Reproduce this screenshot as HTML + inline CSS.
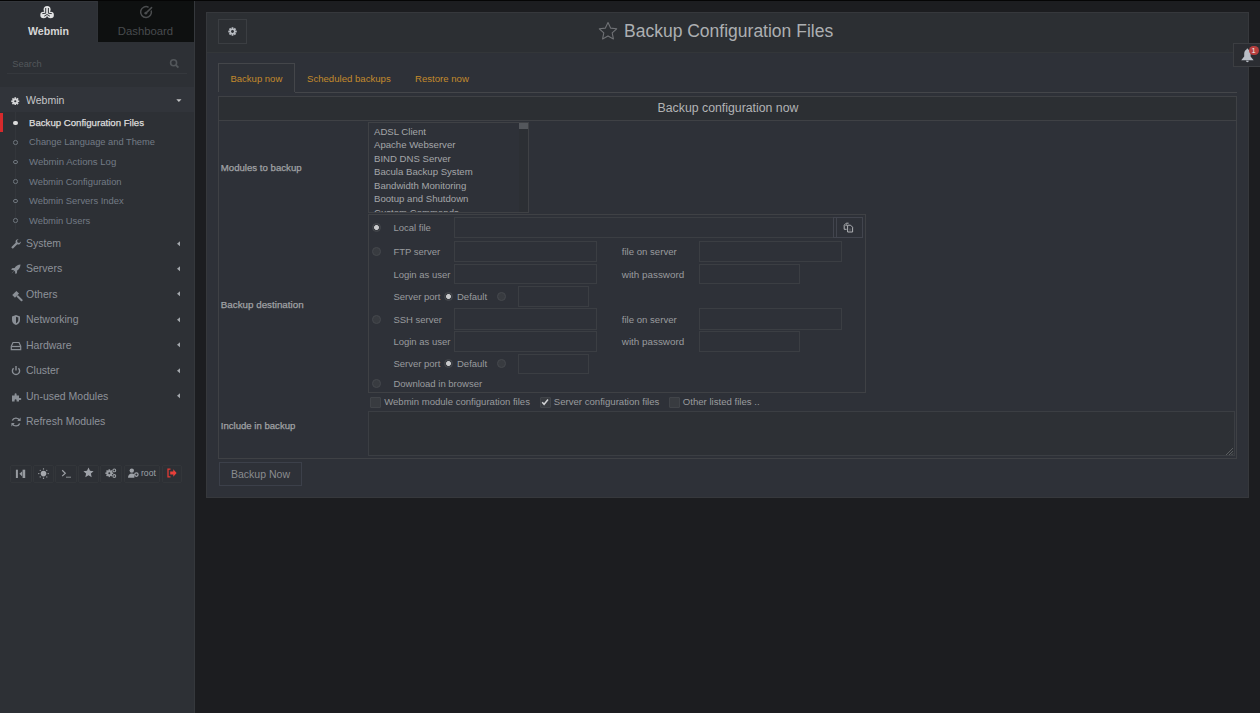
<!DOCTYPE html>
<html><head><meta charset="utf-8"><title>Backup Configuration Files</title>
<style>
*{box-sizing:border-box;margin:0;padding:0}
html,body{width:1260px;height:713px;overflow:hidden;background:#1c1d20;font-family:"Liberation Sans",sans-serif}
.a{position:absolute}
.t{position:absolute;white-space:nowrap;line-height:1}
.sub{font-size:9.4px;color:#78808a}
.menu{font-size:10.5px;color:#959aa1}
.bbtn{position:absolute;top:464.5px;height:18.5px;border:1px solid #33363a;border-radius:2px}
.lbl{font-size:9.5px;color:#999b9e}
.inp{position:absolute;border:1px solid #3b3e43}
.radio{position:absolute;width:9px;height:9px;border-radius:50%;background:#383b40;border:1px solid #45484d}
.radio.on{background:radial-gradient(circle at 50% 50%,#c9cacc 0,#c9cacc 2.1px,#383b40 2.8px)}
.cb{position:absolute;width:11px;height:11px;border:1px solid #414449;background:#383b40;border-radius:1px}
</style></head><body>
<div class="a" style="left:0px;top:0px;width:1260px;height:1px;background:#050505;"></div>
<div class="a" style="left:0px;top:1px;width:194px;height:712px;background:#2d3035;"></div>
<div class="a" style="left:194px;top:1px;width:1px;height:712px;background:#35383c;"></div>
<div class="a" style="left:98px;top:1px;width:96px;height:41px;background:#0e1010;"></div>
<div class="a" style="left:0px;top:1px;width:97px;height:1px;background:#33363b;"></div>
<div class="a" style="left:97px;top:1px;width:1px;height:41px;background:#303338;"></div>
<svg class="a" style="left:36px;top:2px" width="24" height="20" viewBox="0 0 24 20"><g fill="#e2e3e4"><circle cx="11.1" cy="7.4" r="3.5"/><circle cx="7.6" cy="13" r="3.3"/><circle cx="14.6" cy="13" r="3.3"/><path d="M11.1 7.1L7.6 13 11.05 14.6 14.6 13z"/></g><path d="M9.7 6V11.3L6.3 11.6M12.4 6V11.3L15.8 11.6M8.2 14.2L11.05 12.5 13.9 14.2" fill="none" stroke="#2d3035" stroke-width="0.95"/></svg>
<div class="t" style="left:0;width:97px;text-align:center;top:26px;font-size:10.6px;font-weight:700;color:#d6d6d6">Webmin</div>
<svg class="a" style="left:134px;top:2px" width="24" height="20" viewBox="0 0 24 20"><path d="M14.6 5.3A5.4 5.4 0 1 0 17.2 8.5" fill="none" stroke="#4b4d4f" stroke-width="1.5"/><path d="M11.9 11.1L17.6 5.6" stroke="#4b4d4f" stroke-width="1.5" stroke-linecap="round"/><circle cx="11.8" cy="11.2" r="1.4" fill="#4b4d4f"/></svg>
<div class="t" style="left:97px;width:97px;text-align:center;top:26px;font-size:11.3px;color:#484b4e">Dashboard</div>
<div class="t" style="left:12.3px;top:59.8px;font-size:9.3px;color:#53575b;">Search</div>
<svg class="a" style="left:169px;top:58px" width="11" height="11" viewBox="0 0 11 11"><circle cx="4.6" cy="4.8" r="3" fill="none" stroke="#53575b" stroke-width="1.6"/><path d="M6.9 7.1L9.4 9.6" stroke="#53575b" stroke-width="1.8"/></svg>
<div class="a" style="left:7px;top:73px;width:180px;height:1px;background:#35383d;"></div>
<div class="a" style="left:0px;top:87px;width:194px;height:25px;background:#31343a;"></div>
<svg class="a" style="left:11px;top:96.5px" width="8.5" height="8.5" viewBox="0 0 10 10"><g fill="#d5d6d8"><circle cx="5" cy="5" r="3.3"/><rect x="4" y="0.3" width="2" height="9.4"/><rect x="0.3" y="4" width="9.4" height="2"/><rect x="4" y="0.3" width="2" height="9.4" transform="rotate(45 5 5)"/><rect x="4" y="0.3" width="2" height="9.4" transform="rotate(-45 5 5)"/></g><circle cx="5" cy="5" r="1.3" fill="#31343a"/></svg>
<div class="t" style="left:26px;top:95.2px;font-size:10.5px;color:#c6c7c9;">Webmin</div>
<svg class="a" style="left:175.5px;top:98.5px" width="6" height="4" viewBox="0 0 6 4"><path d="M0.3 0.3H5.5L2.9 3z" fill="#c0c1c3"/></svg>
<div class="a" style="left:15px;top:112px;width:1px;height:118px;background:#33363b;"></div>
<div class="a" style="left:0px;top:112.5px;width:3px;height:19.5px;background:#d62a2c;"></div>
<div class="a" style="left:13.25px;top:120.75px;width:4.5px;height:4.5px;background:#dcdcdc;border-radius:50%"></div>
<div class="t" style="left:29px;top:117.7px;font-size:9.65px;color:#dedede;-webkit-text-stroke:0.25px #dedede">Backup Configuration Files</div>
<div class="a" style="left:13.25px;top:140.05px;width:4.5px;height:4.5px;background:#2d3035;border:1px solid #6f767e;border-radius:50%"></div>
<div class="t" style="left:29px;top:137.8px;font-size:9.3px;color:#737b85;">Change Language and Theme</div>
<div class="a" style="left:13.25px;top:159.55px;width:4.5px;height:4.5px;background:#2d3035;border:1px solid #6f767e;border-radius:50%"></div>
<div class="t" style="left:29px;top:157.3px;font-size:9.6px;color:#737b85;">Webmin Actions Log</div>
<div class="a" style="left:13.25px;top:179.25px;width:4.5px;height:4.5px;background:#2d3035;border:1px solid #6f767e;border-radius:50%"></div>
<div class="t" style="left:29px;top:177.0px;font-size:9.4px;color:#737b85;">Webmin Configuration</div>
<div class="a" style="left:13.25px;top:198.55px;width:4.5px;height:4.5px;background:#2d3035;border:1px solid #6f767e;border-radius:50%"></div>
<div class="t" style="left:29px;top:196.3px;font-size:9.4px;color:#737b85;">Webmin Servers Index</div>
<div class="a" style="left:13.25px;top:218.15px;width:4.5px;height:4.5px;background:#2d3035;border:1px solid #6f767e;border-radius:50%"></div>
<div class="t" style="left:29px;top:215.9px;font-size:9.4px;color:#737b85;">Webmin Users</div>
<svg class="a" style="left:9.5px;top:237.8px" width="13" height="13" viewBox="0 0 13 13"><path d="M8.6 1.2a2.6 2.6 0 0 0-2.9 3.5L1.2 9.2l1.6 1.6 4.5-4.5a2.6 2.6 0 0 0 3.5-2.9L9.2 5 7.6 4.4 7 2.8z" fill="#8a8f96"/></svg>
<div class="t" style="left:26px;top:237.9px;font-size:10.5px;color:#8d929a;">System</div>
<svg class="a" style="left:176.5px;top:240.5px" width="4" height="6" viewBox="0 0 4 6"><path d="M3 0.3V5.3L0 2.8z" fill="#a3a7ac"/></svg>
<svg class="a" style="left:9.5px;top:263.1px" width="13" height="13" viewBox="0 0 13 13"><path d="M10.5 1.5C8 1.5 6 3 4.6 5L2 5.3 1.2 6.8l2.4.4L5 8.6l.4 2.4 1.5-.8.3-2.6C9.2 6.2 10.5 4 10.5 1.5z M3.4 8.2L1.5 10.5 3.8 8.6z" fill="#8a8f96"/></svg>
<div class="t" style="left:26px;top:263.2px;font-size:10.5px;color:#8d929a;">Servers</div>
<svg class="a" style="left:176.5px;top:265.8px" width="4" height="6" viewBox="0 0 4 6"><path d="M3 0.3V5.3L0 2.8z" fill="#a3a7ac"/></svg>
<svg class="a" style="left:9.5px;top:288.7px" width="13" height="13" viewBox="0 0 13 13"><path d="M9.06 4.56L6.38 1.88 2.28 5.96 4.96 8.66z" fill="#8a8f96"/><path d="M7.6 7.3L11.6 11.3" stroke="#8a8f96" stroke-width="2" stroke-linecap="round"/></svg>
<div class="t" style="left:26px;top:288.8px;font-size:10.5px;color:#8d929a;">Others</div>
<svg class="a" style="left:176.5px;top:291.4px" width="4" height="6" viewBox="0 0 4 6"><path d="M3 0.3V5.3L0 2.8z" fill="#a3a7ac"/></svg>
<svg class="a" style="left:9.5px;top:314.0px" width="13" height="13" viewBox="0 0 13 13"><path d="M6 1L10 2.5V6c0 2.5-1.8 4.2-4 5-2.2-.8-4-2.5-4-5V2.5z" fill="#8a8f96"/><path d="M6 2.7V9.3C7.3 8.6 8.3 7.5 8.3 6V3.5z" fill="#2d3035"/></svg>
<div class="t" style="left:26px;top:314.1px;font-size:10.5px;color:#8d929a;">Networking</div>
<svg class="a" style="left:176.5px;top:316.7px" width="4" height="6" viewBox="0 0 4 6"><path d="M3 0.3V5.3L0 2.8z" fill="#a3a7ac"/></svg>
<svg class="a" style="left:9.5px;top:339.5px" width="13" height="13" viewBox="0 0 13 13"><path d="M1.3 6.2L3 2.5h6L10.7 6.2V9.7H1.3z" fill="none" stroke="#8a8f96" stroke-width="1.2"/><path d="M1.3 6.5h9.4" stroke="#8a8f96" stroke-width="1.2"/></svg>
<div class="t" style="left:26px;top:339.6px;font-size:10.5px;color:#8d929a;">Hardware</div>
<svg class="a" style="left:176.5px;top:342.2px" width="4" height="6" viewBox="0 0 4 6"><path d="M3 0.3V5.3L0 2.8z" fill="#a3a7ac"/></svg>
<svg class="a" style="left:9.5px;top:364.9px" width="13" height="13" viewBox="0 0 13 13"><path d="M3.6 3.2A3.6 3.6 0 1 0 8.4 3.2" fill="none" stroke="#8a8f96" stroke-width="1.4"/><path d="M6 1v4.5" stroke="#8a8f96" stroke-width="1.4"/></svg>
<div class="t" style="left:26px;top:365.0px;font-size:10.5px;color:#8d929a;">Cluster</div>
<svg class="a" style="left:176.5px;top:367.6px" width="4" height="6" viewBox="0 0 4 6"><path d="M3 0.3V5.3L0 2.8z" fill="#a3a7ac"/></svg>
<svg class="a" style="left:9.5px;top:390.5px" width="13" height="13" viewBox="0 0 13 13"><path d="M2 4.5H4.6V3.2a1 1 0 0 1 2 0V4.5H9V6.9h1.3a1 1 0 0 1 0 2H9V10.6H6.6V9.2a1 1 0 0 0-2 0V10.6H2z" fill="#8a8f96"/></svg>
<div class="t" style="left:26px;top:390.6px;font-size:10.5px;color:#8d929a;">Un-used Modules</div>
<svg class="a" style="left:176.5px;top:393.2px" width="4" height="6" viewBox="0 0 4 6"><path d="M3 0.3V5.3L0 2.8z" fill="#a3a7ac"/></svg>
<svg class="a" style="left:9.5px;top:416.0px" width="13" height="13" viewBox="0 0 13 13"><path d="M9.6 4.3A4 4 0 0 0 2.3 4.6M2.4 7.7A4 4 0 0 0 9.7 7.4" fill="none" stroke="#8a8f96" stroke-width="1.4"/><path d="M10.6 1.6V5H7.2z M1.4 10.4V7h3.4z" fill="#8a8f96"/></svg>
<div class="t" style="left:26px;top:416.1px;font-size:10.5px;color:#8d929a;">Refresh Modules</div>
<div class="bbtn" style="left:10.3px;width:21.4px"></div>
<div class="bbtn" style="left:33.3px;width:20.7px"></div>
<div class="bbtn" style="left:55.2px;width:21.4px"></div>
<div class="bbtn" style="left:78.2px;width:20.6px"></div>
<div class="bbtn" style="left:100.4px;width:21.4px"></div>
<div class="bbtn" style="left:124.3px;width:36px"></div>
<div class="bbtn" style="left:162.2px;width:19.5px"></div>
<svg class="a" style="left:15px;top:469px" width="11" height="10" viewBox="0 0 11 10"><rect x="0.9" y="0.7" width="2" height="8.3" fill="#979ba0"/><path d="M4.4 4.85L7.2 2.2V7.5z" fill="#979ba0"/><rect x="7.6" y="0.7" width="2.6" height="8.3" fill="#979ba0"/></svg>
<svg class="a" style="left:38px;top:468px" width="11" height="11" viewBox="0 0 11 11"><circle cx="5.5" cy="5.6" r="2.8" fill="#a5a8ad"/><g fill="#a5a8ad"><circle cx="5.5" cy="0.9" r="0.7"/><circle cx="5.5" cy="10.3" r="0.7"/><circle cx="0.8" cy="5.6" r="0.7"/><circle cx="10.2" cy="5.6" r="0.7"/><circle cx="2.2" cy="2.3" r="0.6"/><circle cx="8.8" cy="2.3" r="0.6"/><circle cx="2.2" cy="8.9" r="0.6"/><circle cx="8.8" cy="8.9" r="0.6"/></g></svg>
<svg class="a" style="left:61px;top:469px" width="11" height="9" viewBox="0 0 11 9"><path d="M1.2 1.3L4.3 4.2 1.2 7.1" fill="none" stroke="#9da0a5" stroke-width="1.2"/><path d="M5 8.2H10" stroke="#9da0a5" stroke-width="0.85"/></svg>
<svg class="a" style="left:83px;top:467px" width="11" height="11" viewBox="0 0 11 11"><path d="M5.5 0.5l1.5 3.3 3.6.4-2.7 2.4.8 3.6-3.2-1.9-3.2 1.9.8-3.6L.4 4.2 4 3.8z" fill="#9ea2a8"/></svg>
<svg class="a" style="left:104px;top:466px" width="14" height="13" viewBox="0 0 14 13"><g fill="#9a9ea3"><circle cx="5.3" cy="7.2" r="2.9"/><rect x="4.5" y="3.3" width="1.6" height="7.8"/><rect x="1.4" y="6.4" width="7.8" height="1.6"/><rect x="4.5" y="3.3" width="1.6" height="7.8" transform="rotate(45 5.3 7.2)"/><rect x="4.5" y="3.3" width="1.6" height="7.8" transform="rotate(-45 5.3 7.2)"/></g><circle cx="5.3" cy="7.2" r="1" fill="#2d3035"/><circle cx="10.3" cy="4.4" r="1.4" fill="none" stroke="#9a9ea3" stroke-width="1.1"/><circle cx="10.3" cy="10" r="1.4" fill="none" stroke="#9a9ea3" stroke-width="1.1"/></svg>
<svg class="a" style="left:127px;top:467px" width="12" height="12" viewBox="0 0 12 12"><circle cx="4.8" cy="3.6" r="2.2" fill="#9ea2a8"/><path d="M1 10.8c0-2.6 1.5-4.2 3.8-4.2 1.2 0 2 .3 2.6.8V10.8z" fill="#9ea2a8"/><circle cx="9.4" cy="7.6" r="1.7" fill="none" stroke="#9ea2a8" stroke-width="1.2"/></svg>
<div class="t" style="left:141px;top:468.5px;font-size:8.6px;color:#9ea2a8;">root</div>
<svg class="a" style="left:166px;top:468px" width="12" height="10" viewBox="0 0 12 10"><path d="M4.5 1.2H2V8.8H4.5" fill="none" stroke="#e13a35" stroke-width="1.3"/><path d="M4.2 3.6H7.3V1.3L10.6 5 7.3 8.7V6.4H4.2z" fill="#e8403a"/></svg>
<div class="a" style="left:206px;top:12px;width:1043px;height:486px;background:#2e3138;border:1px solid #36383c;"></div>
<div class="a" style="left:207px;top:13px;width:1041px;height:39px;background:#2c2f33;"></div>
<div class="a" style="left:207px;top:52px;width:1041px;height:1px;background:#333639;"></div>
<div class="a" style="left:218px;top:19px;width:29px;height:25px;border:1px solid #3b3e42;"></div>
<svg class="a" style="left:228px;top:27px" width="9" height="9" viewBox="0 0 10 10"><g fill="#babdc3"><circle cx="5" cy="5" r="3.3"/><rect x="4" y="0.3" width="2" height="9.4"/><rect x="0.3" y="4" width="9.4" height="2"/><rect x="4" y="0.3" width="2" height="9.4" transform="rotate(45 5 5)"/><rect x="4" y="0.3" width="2" height="9.4" transform="rotate(-45 5 5)"/></g><circle cx="5" cy="5" r="1.6" fill="#2c2f33"/></svg>
<svg class="a" style="left:598px;top:21px" width="20" height="20" viewBox="0 0 20 20"><path d="M10 1.5l2.6 5.6 6.1.7-4.5 4.1 1.2 6-5.4-3-5.4 3 1.2-6L1.3 7.8l6.1-.7z" fill="none" stroke="#707276" stroke-width="1.1" stroke-linejoin="round"/></svg>
<div class="t" style="left:624px;top:23.2px;font-size:17.5px;color:#adafb2;">Backup Configuration Files</div>
<div class="a" style="left:1233px;top:43px;width:28px;height:24px;background:#2b2d32;border:1px solid #3c3e42;"></div>
<svg class="a" style="left:1240px;top:47.5px" width="15" height="15" viewBox="0 0 15 15"><path d="M7.4 0.4C6.9 0.4 6.6 0.9 6.5 1.4 4.9 2.2 4.2 3.8 4.2 6V8.4L1.2 12.2H13.6L10.6 8.4V6C10.6 3.8 9.9 2.2 8.3 1.4 8.2 0.9 7.9 0.4 7.4 0.4z M6 12.8a1.4 1.4 0 0 0 2.8 0z" fill="#b9bec6"/></svg>
<div class="a" style="left:1249px;top:45.8px;width:9.6px;height:9.6px;background:#b73e3e;border-radius:50%"></div>
<div class="t" style="left:1248.5px;width:10px;text-align:center;top:47.3px;font-size:7.5px;color:#f0f0f0">1</div>
<div class="a" style="left:218px;top:63px;width:77px;height:29px;border:1px solid #44464a;border-bottom:none;background:#2e3137"></div>
<div class="a" style="left:295px;top:92px;width:942px;height:1px;background:#44464a;"></div>
<div class="t" style="left:230.5px;top:73.8px;font-size:9.5px;color:#c38a2c;">Backup now</div>
<div class="t" style="left:307px;top:73.8px;font-size:9.6px;color:#c38a2c;">Scheduled backups</div>
<div class="t" style="left:415px;top:73.8px;font-size:9.6px;color:#c38a2c;">Restore now</div>
<div class="a" style="left:218px;top:96px;width:1019px;height:363px;border:1px solid #3f4145;"></div>
<div class="a" style="left:219px;top:97px;width:1017px;height:23px;background:#2c2f33;"></div>
<div class="a" style="left:219px;top:120px;width:1017px;height:1px;background:#3f4145;"></div>
<div class="t" style="left:220px;width:1016px;text-align:center;top:101.5px;font-size:12.3px;color:#b2b3b5">Backup configuration now</div>
<div class="t" style="left:220.8px;top:162.7px;font-size:9.65px;color:#a0a2a5;-webkit-text-stroke:0.25px #a0a2a5">Modules to backup</div>
<div class="t" style="left:220.8px;top:299.6px;font-size:9.8px;color:#a0a2a5;-webkit-text-stroke:0.25px #a0a2a5">Backup destination</div>
<div class="t" style="left:220.8px;top:421.2px;font-size:9.58px;color:#a0a2a5;-webkit-text-stroke:0.25px #a0a2a5">Include in backup</div>
<div class="a" style="left:368px;top:122px;width:161px;height:91px;border:1px solid #3f4145;overflow:hidden"><div class="a" style="left:150px;top:0;width:10px;height:89px;background:#2c2f34"></div><div class="a" style="left:150px;top:0;width:9px;height:6px;background:#54575c"></div><div class="t" style="left:5px;top:1.5px;font-size:9.6px;line-height:13.5px;color:#a4a6a9">ADSL Client<br>Apache Webserver<br>BIND DNS Server<br>Bacula Backup System<br>Bandwidth Monitoring<br>Bootup and Shutdown<br>Custom Commands</div></div>
<div class="a" style="left:368px;top:214px;width:498px;height:179px;border:1px solid #3f4145;"></div>
<div class="radio on" style="left:372.0px;top:223.0px"></div>
<div class="t lbl" style="left:393.4px;top:223.0px;font-size:9.5px">Local file</div>
<div class="inp" style="left:454px;top:217.0px;width:380px;height:21.0px"></div>
<div class="a" style="left:833px;top:217px;width:30px;height:21px;border:1px solid #42454e;"></div>
<div class="a" style="left:836px;top:218px;width:1px;height:19px;background:#42454e;"></div>
<svg class="a" style="left:843px;top:222px" width="11" height="11" viewBox="0 0 11 11"><path d="M5.6 1.2H3.2L1.2 3.2V7.3H3.6" fill="none" stroke="#b0b2b5" stroke-width="1"/><path d="M2.3 3.6H3.6V2.2" fill="none" stroke="#b0b2b5" stroke-width="0.8"/><path d="M4.6 3.2H7.6L9.6 5.2V10H4.6z" fill="#2e3139" stroke="#b0b2b5" stroke-width="1"/><path d="M6 6.5H8.2V8.8H6z" fill="#4a4d52"/></svg>
<div class="radio" style="left:372.0px;top:246.8px"></div>
<div class="t lbl" style="left:393.4px;top:246.8px;font-size:9.5px">FTP server</div>
<div class="inp" style="left:454px;top:240.7px;width:143px;height:21.6px"></div>
<div class="t lbl" style="left:393.4px;top:269.5px;font-size:9.5px">Login as user</div>
<div class="inp" style="left:454px;top:263.5px;width:143px;height:20.8px"></div>
<div class="t lbl" style="left:393.4px;top:291.5px;font-size:9.5px">Server port</div>
<div class="radio on" style="left:444.2px;top:291.5px"></div>
<div class="t lbl" style="left:457px;top:291.5px;font-size:9.5px">Default</div>
<div class="radio" style="left:496.8px;top:291.5px"></div>
<div class="inp" style="left:518px;top:286.0px;width:71px;height:20.7px"></div>
<div class="t lbl" style="left:621.8px;top:246.8px;font-size:9.6px">file on server</div>
<div class="inp" style="left:699px;top:240.7px;width:143px;height:21.6px"></div>
<div class="t lbl" style="left:621.8px;top:269.5px;font-size:9.85px">with password</div>
<div class="inp" style="left:699px;top:263.5px;width:101px;height:20.8px"></div>
<div class="radio" style="left:372.0px;top:314.5px"></div>
<div class="t lbl" style="left:393.4px;top:314.5px;font-size:9.5px">SSH server</div>
<div class="inp" style="left:454px;top:308.4px;width:143px;height:21.6px"></div>
<div class="t lbl" style="left:393.4px;top:337.0px;font-size:9.5px">Login as user</div>
<div class="inp" style="left:454px;top:331.0px;width:143px;height:20.8px"></div>
<div class="t lbl" style="left:393.4px;top:359.2px;font-size:9.5px">Server port</div>
<div class="radio on" style="left:444.2px;top:359.2px"></div>
<div class="t lbl" style="left:457px;top:359.2px;font-size:9.5px">Default</div>
<div class="radio" style="left:496.8px;top:359.2px"></div>
<div class="inp" style="left:518px;top:353.7px;width:71px;height:20.7px"></div>
<div class="t lbl" style="left:621.8px;top:314.5px;font-size:9.6px">file on server</div>
<div class="inp" style="left:699px;top:308.4px;width:143px;height:21.6px"></div>
<div class="t lbl" style="left:621.8px;top:337.0px;font-size:9.85px">with password</div>
<div class="inp" style="left:699px;top:331.0px;width:101px;height:20.8px"></div>
<div class="radio" style="left:372.0px;top:378.5px"></div>
<div class="t lbl" style="left:393.4px;top:378.5px;font-size:9.5px">Download in browser</div>
<div class="cb" style="left:370.2px;top:396.9px"></div>
<div class="t lbl" style="left:384.2px;top:397.2px;font-size:9.55px">Webmin module configuration files</div>
<div class="cb" style="left:539.7px;top:396.9px"></div>
<svg class="a" style="left:541px;top:398.4px" width="8" height="8" viewBox="0 0 8 8"><path d="M1.2 4.3L3.1 6.3 7 1.6" fill="none" stroke="#d2d3d5" stroke-width="1.5"/></svg>
<div class="t lbl" style="left:553.8px;top:397.2px;font-size:9.6px">Server configuration files</div>
<div class="cb" style="left:668.7px;top:396.9px"></div>
<div class="t lbl" style="left:682.8px;top:397.2px;font-size:9.6px">Other listed files ..</div>
<div class="inp" style="left:368px;top:411px;width:867px;height:45px;background:#2d3035"></div>
<svg class="a" style="left:1225px;top:447px" width="9" height="8" viewBox="0 0 9 8"><path d="M8 1L1 8M8 4L4 8M8 6.5L6.5 8" stroke="#66696c" stroke-width="0.8"/></svg>
<div class="a" style="left:219px;top:462px;width:83px;height:24px;border:1px solid #3c404a"></div>
<div class="t" style="left:219px;width:83px;text-align:center;top:468.8px;font-size:10.5px;color:#8a8c8f">Backup Now</div>
</body></html>
